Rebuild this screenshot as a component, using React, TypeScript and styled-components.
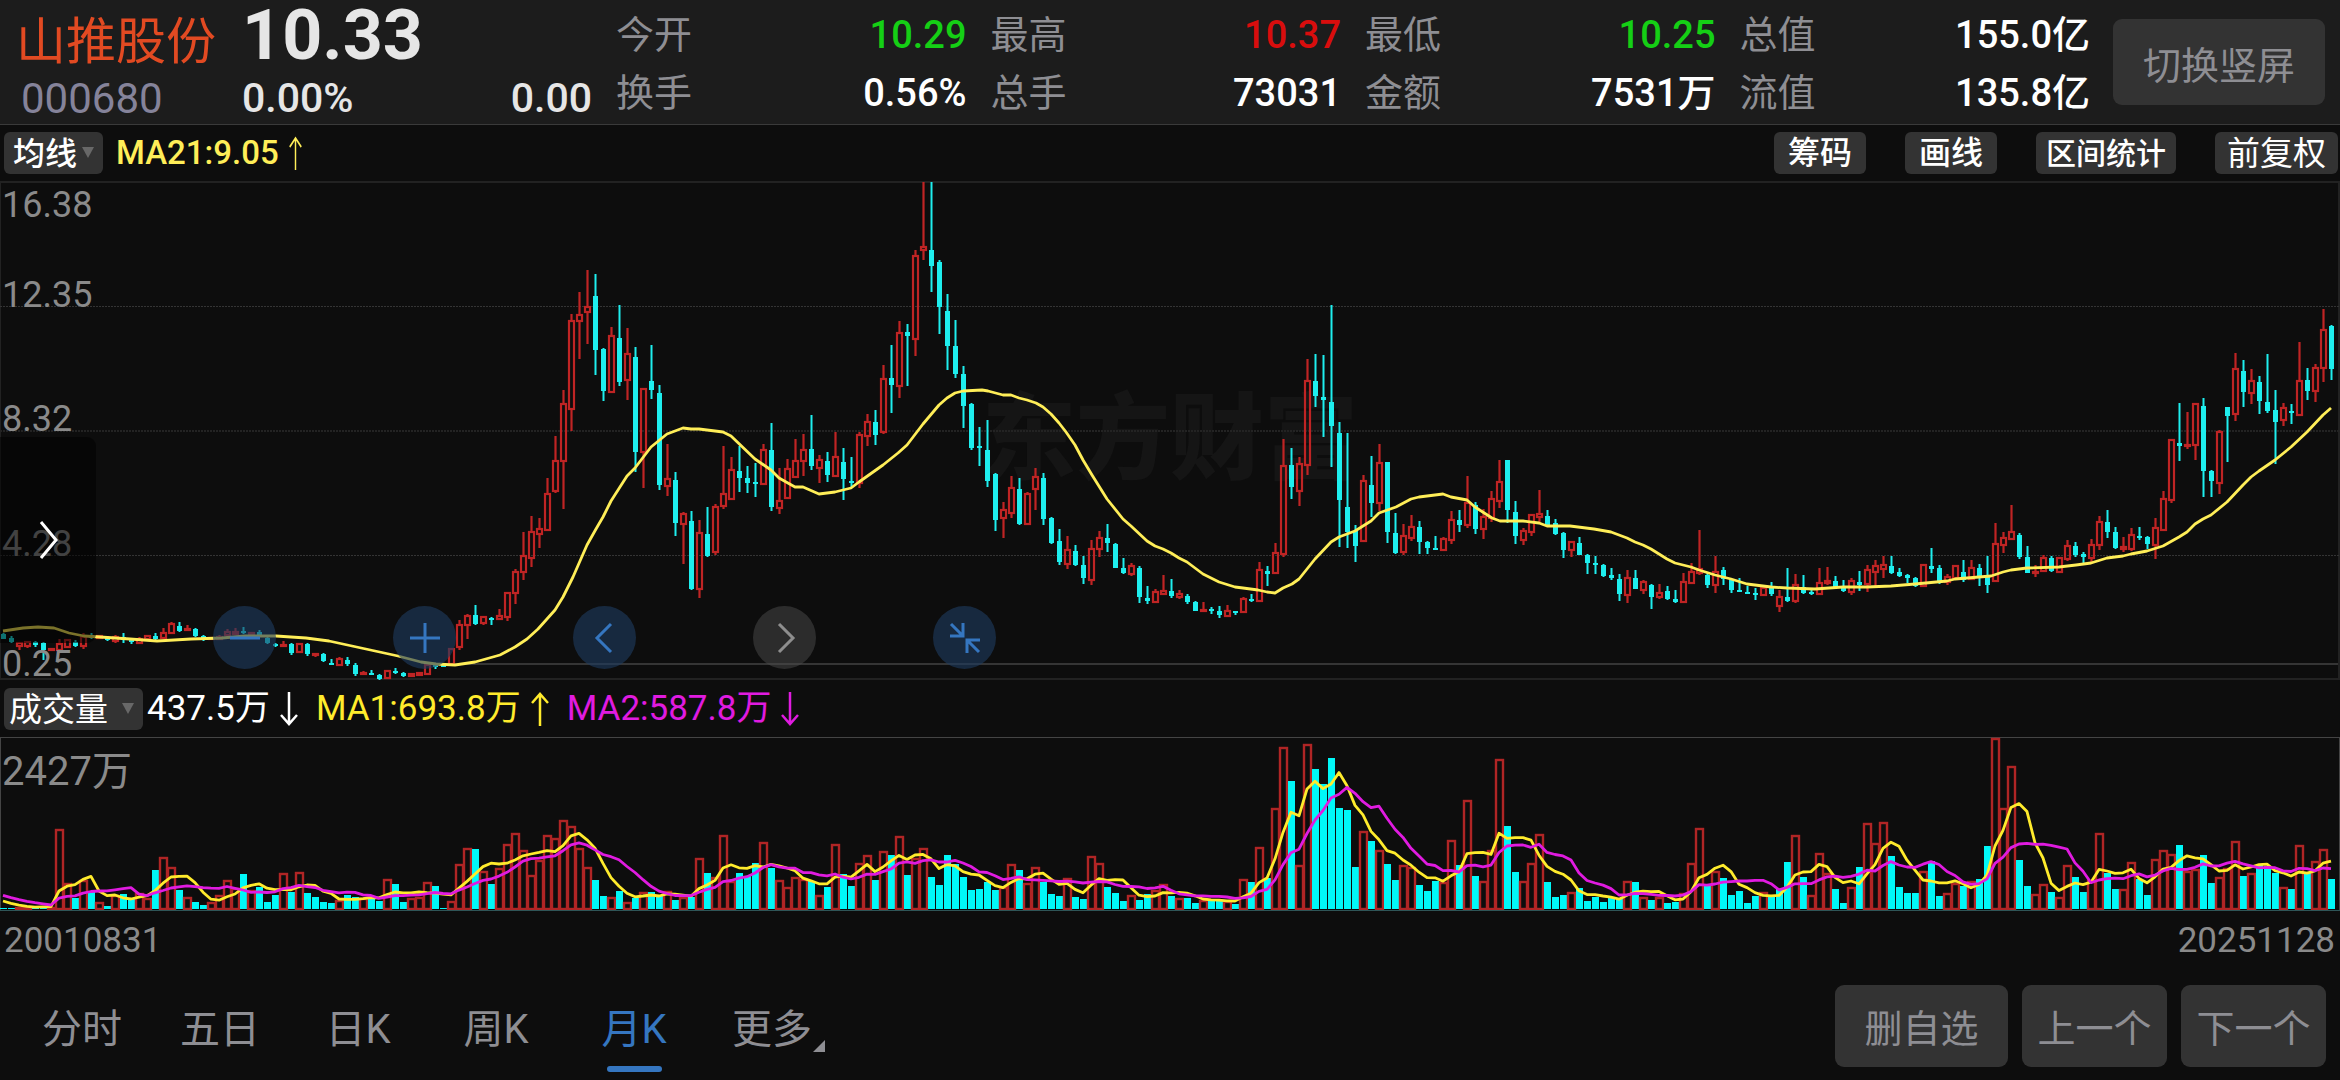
import React from 'react';
import styled, { createGlobalStyle } from 'styled-components';

const color = {
  page: '#0d0d0d',
  header: '#1c1c1c',
  button: '#333333',
  rule: '#222222',
  muted: '#8e8e93',
  axis: '#8a8a8a',
  up: '#bf2424',
  down: '#1eeeee',
  volUp: '#b02525',
  volDown: '#00f8f8',
  yellow: '#ffee58',
  volYellow: '#ffeb2c',
  magenta: '#e01be0',
  blue: '#3576c0',
};

const Global = createGlobalStyle`
  *, *::before, *::after { box-sizing: border-box; }
  body {
    margin: 0;
    background: ${color.page};
    font-family: Roboto, 'Noto Sans CJK SC', sans-serif;
  }
  button, select { font-family: inherit; border: 0; margin: 0; cursor: pointer; }
  dl, dt, dd, h1, p { margin: 0; font-weight: inherit; }
`;

/* ---------- data: monthly bars, c = close below open, r = close above open ---------- */
/* each bar: high, body top, body bottom, low, as chart ordinates */

const BARS = `
c633,634,639,639 c636,638,642,643 r642,643,646,650 r641,642,646,648 c641,642,645,647 c642,643,650,660
r648,649,650,651 r639,644,650,651 r639,640,647,648 c640,642,646,647 r633,637,646,649 c633,635,638,639
r635,636,638,638 c636,638,640,641 r635,637,641,643 c633,637,640,643 c638,640,642,644 r637,639,643,644
r635,636,639,640 c633,636,639,640 r628,633,638,639 r622,624,633,634 c622,626,631,632 r625,629,630,631
c628,629,636,637 c635,636,639,641 r637,638,639,640 r635,637,639,640 r629,632,635,637 r628,632,634,635
c627,631,633,634 r632,633,634,635 c630,632,636,637 c636,638,643,644 c643,644,645,647 r641,645,646,647
c643,644,653,655 r643,644,652,653 c643,644,654,656 r653,654,655,657 c653,654,661,662 c659,663,664,665
r657,659,665,666 c657,660,664,666 c663,665,674,676 r671,673,674,675 c670,673,674,675 c674,675,679,680
r670,671,678,679 c668,671,673,674 c672,673,676,677 r673,674,676,677 r672,673,675,676 r664,665,674,675
c663,665,667,669 c665,665,667,667 r648,649,664,665 r620,625,647,650 r614,616,625,639 c605,615,624,625
r616,617,623,625 c617,618,620,625 r609,616,619,620 r593,593,617,621 r569,572,593,604 r532,556,572,580
r516,532,558,567 r518,529,534,548 r478,494,530,531 r436,461,491,493 r390,404,461,509 r314,321,409,431
r292,315,321,359 r270,307,312,344 c274,296,350,375 c348,349,391,401 r327,336,392,393 c305,338,382,386
r328,354,380,400 c347,357,452,472 r388,389,452,488 c345,381,390,399 c385,393,485,490 r444,479,486,496
c472,480,523,536 r512,514,524,564 c511,521,589,590 r520,533,589,598 c507,534,556,557 r504,507,552,555
r446,494,506,509 r457,470,499,499 c446,471,478,492 c466,478,483,493 c463,482,484,497 r444,450,484,485
c423,450,507,511 r468,501,508,514 r459,469,498,499 r439,461,477,478 r434,450,461,476 c415,449,466,470
r455,460,468,483 c452,461,475,482 r432,457,476,477 c448,462,479,500 c457,481,483,488 r432,435,483,488
r414,422,436,446 c410,422,435,445 r365,379,432,434 c345,378,385,413 r321,333,386,398 c324,332,336,386
r250,256,339,356 r182,247,250,260 c182,250,266,292 c260,262,307,334 c294,311,346,370 c320,346,374,378
c366,374,406,428 c403,404,448,450 c427,446,448,466 c420,450,481,487 c473,474,520,531 r502,510,518,538
r476,488,513,518 c478,489,524,525 r492,494,524,524 r468,477,489,510 c473,478,519,525 c517,518,543,544
c529,541,562,565 r536,550,564,569 c545,551,565,566 c556,565,578,584 r540,549,580,585 r531,538,549,557
c524,538,543,552 c543,544,568,568 c558,568,573,574 r563,566,574,576 c566,568,597,603 c586,598,601,604
r589,592,602,602 r575,591,594,595 c579,591,596,598 r590,594,597,599 c594,596,602,604 c601,602,611,611
r602,610,611,612 c607,609,611,614 c606,611,615,618 r605,611,616,617 c611,611,613,615 r597,599,612,613
c594,599,601,602 r562,570,601,601 c566,571,574,586 r543,553,573,574 r439,466,554,557 c448,465,487,499
r457,464,491,506 r359,381,465,475 c354,381,396,407 c355,397,400,437 c305,402,426,467 c422,433,500,547
c433,507,532,548 c525,531,546,562 r475,481,541,542 c456,485,503,517 r444,463,503,511 c462,462,532,543
c513,533,553,554 r524,536,552,555 r515,527,538,541 c521,527,542,554 c541,542,548,554 c536,548,549,550
r537,539,550,551 r511,520,540,544 c510,520,525,532 r476,503,525,528 c502,505,529,534 r509,517,529,539
r491,499,518,522 r460,482,501,508 c460,460,510,523 c501,512,536,544 r528,531,540,545 r514,515,532,536
r490,514,517,522 c510,516,525,527 c519,523,534,535 c532,533,550,558 r541,542,550,557 c537,543,555,555
c554,555,563,574 c556,563,565,574 c564,565,576,577 c568,575,578,580 c574,579,594,601 r570,578,595,603
c570,578,589,589 r580,582,590,594 c584,585,597,609 r584,593,597,599 c586,591,599,600 c590,599,602,603
r573,582,602,602 r563,572,583,583 r530,569,573,575 c573,575,585,588 r556,572,585,593 c567,570,579,585
c579,579,590,593 c578,590,591,592 c586,592,593,594 c588,593,595,600 r587,588,595,596 c582,587,594,596
r590,597,606,612 c568,597,601,602 r574,585,601,603 c575,587,593,594 c590,592,594,595 r568,583,594,595
r567,581,583,585 c576,581,587,587 c580,586,591,592 r578,581,592,595 c571,582,585,591 r565,570,584,592
r560,566,572,588 r556,565,569,578 c556,566,573,574 c568,572,576,577 c574,575,578,583 c577,578,586,587
r564,565,586,587 c548,566,569,573 c565,568,583,584 r574,577,582,585 r565,566,578,579 c560,572,580,582
r560,568,579,579 c564,568,577,586 c556,575,585,593 r523,544,581,582 r532,538,545,553 r505,532,539,540
c533,535,557,559 c546,557,573,573 r565,572,573,577 r555,558,571,572 c556,558,571,572 r557,558,572,572
r540,546,559,561 c542,546,555,557 c552,554,557,563 r539,545,558,562 r516,522,545,550 c510,522,532,538
c527,532,548,549 r537,547,549,552 r528,535,549,551 c527,536,537,540 c536,537,544,549 r518,528,545,559
r491,499,530,531 r439,440,500,503 c403,443,446,461 r412,445,446,449 r403,404,445,460 c398,406,471,497
c470,471,481,497 r430,432,483,494 c407,407,416,462 r353,369,414,421 c360,371,392,407 r369,381,393,404
c376,382,401,414 c354,402,411,413 c390,410,422,464 r403,408,420,426 c404,411,413,424 r342,381,415,416
c368,380,391,400 r364,368,391,402 r309,330,368,382 c325,326,369,380`;

const MA21 =
  '3,631 23,628 38,627 54,628 69,633 84,636 100,637 130,639 157,641 191,639 222,638 245,636 276,636 306,638 329,641 352,646 375,651 398,656 421,662 436,664 455,665 475,662 500,655 515,647 527,639 538,629 555,610 563,597 573,577 587,545 596,529 603,517 611,501 627,476 635,468 651,447 667,434 683,428 691,429 699,429 723,432 731,436 755,459 771,470 779,478 795,487 803,487 819,494 835,492 851,488 859,482 883,465 898,453 907,445 923,424 939,405 947,398 955,393 963,391 982,390 988,391 1003,395 1011,395 1019,398 1027,400 1036,403 1043,407 1051,414 1059,423 1066,432 1075,445 1083,460 1092,475 1107,499 1123,519 1131,526 1147,541 1155,546 1163,549 1171,553 1179,558 1187,562 1203,574 1219,582 1235,587 1243,588 1258,590 1267,592 1275,593 1283,588 1292,584 1299,579 1315,559 1331,542 1339,537 1355,531 1371,521 1379,513 1396,507 1411,499 1419,497 1443,494 1451,497 1467,500 1475,507 1492,518 1500,521 1523,521 1539,523 1547,526 1570,526 1594,529 1611,532 1627,538 1635,542 1643,545 1651,549 1667,559 1675,563 1691,567 1699,570 1715,575 1731,579 1747,584 1755,585 1771,587 1787,588 1815,589 1843,587 1867,587 1891,586 1915,584 1947,581 1955,579 1979,577 1991,576 2003,572 2011,570 2027,568 2059,567 2076,565 2091,563 2107,558 2123,556 2131,554 2147,551 2163,546 2179,537 2187,532 2195,524 2203,519 2211,515 2227,502 2243,485 2251,477 2259,471 2275,460 2291,447 2307,432 2323,415 2331,408';

const VOLUME_TOPS = [
  908, 908, 907, 907, 906, 906, 907, 829, 883, 898, 880, 892, 902, 906, 895, 894, 898, 893, 898, 870,
  857, 867, 890, 897, 902, 905, 902, 895, 880, 888, 874, 890, 887, 902, 895, 873, 892, 872, 893, 897,
  902, 903, 900, 895, 897, 898, 898, 901, 879, 884, 902, 898, 897, 882, 886, 908, 901, 864, 848, 849,
  871, 884, 868, 844, 833, 850, 875, 860, 835, 838, 820, 826, 848, 867, 880, 896, 897, 891, 902, 898,
  892, 892, 896, 891, 900, 897, 897, 858, 873, 877, 835, 881, 873, 876, 863, 842, 868, 880, 887, 877,
  879, 881, 895, 887, 844, 874, 886, 863, 855, 880, 851, 855, 836, 875, 858, 848, 877, 885, 855, 864,
  877, 890, 889, 882, 890, 887, 864, 870, 883, 867, 882, 894, 896, 878, 897, 899, 856, 863, 887, 893,
  901, 895, 900, 894, 890, 884, 896, 898, 898, 903, 900, 900, 900, 901, 904, 879, 882, 847, 878, 808,
  747, 781, 865, 744, 769, 784, 758, 808, 810, 867, 831, 841, 850, 864, 880, 865, 867, 885, 891, 881,
  882, 840, 865, 800, 876, 881, 850, 759, 826, 872, 881, 863, 834, 882, 897, 895, 892, 888, 901, 897,
  902, 898, 898, 881, 882, 897, 900, 897, 903, 902, 893, 863, 828, 886, 871, 878, 895, 891, 903, 896,
  892, 897, 889, 862, 835, 877, 895, 853, 873, 889, 903, 887, 867, 823, 843, 822, 856, 887, 893, 893,
  871, 861, 896, 893, 883, 886, 881, 879, 846, 738, 808, 766, 860, 886, 894, 884, 892, 897, 865, 877,
  892, 880, 833, 873, 889, 889, 862, 879, 895, 859, 850, 854, 845, 871, 869, 855, 883, 877, 868, 841,
  876, 873, 865, 866, 873, 887, 889, 845, 872, 861, 849, 879,
];

/* months whose volume bar takes its colour from the previous close, not the open */
const FLIPPED = new Set([39, 222, 226, 278]);

/* volumes of the nine months before the first one shown, for the averages */
const EARLIER = [25, 22, 20, 18, 16, 14, 12, 9, 8];
const BASE = 910;

const bars = BARS.trim().split(/\s+/).map((s) => {
  const [high, top, bottom, low] = s.slice(1).split(',').map(Number);
  return { up: s[0] === 'r', high, top, bottom, low };
});

const xOf = (i: number) => 3 + 8 * i;

function average(span: number): string {
  const all = [...EARLIER, ...VOLUME_TOPS.map((t) => BASE - t)];
  return VOLUME_TOPS.map((_, i) => {
    const end = i + EARLIER.length + 1;
    const sum = all.slice(end - span, end).reduce((a, b) => a + b, 0);
    return `${xOf(i)},${(BASE - sum / span).toFixed(1)}`;
  }).join(' ');
}

/* ---------- layout ---------- */

const Page = styled.main`
  min-height: 100vh;
  display: flex;
  flex-direction: column;
  background: ${color.page};
  color: #fff;
`;

const Header = styled.header`
  display: flex;
  padding: 0 15px 0 16px;
  height: 125px;
  background: ${color.header};
  border-bottom: 1px solid #3a3a3a;
`;

const NameBlock = styled.div`
  width: 226px;
  padding-top: 12px;
`;

const StockName = styled.h1`
  font-size: 50px;
  line-height: 60px;
  color: #e24a22;
  white-space: nowrap;
`;

const Code = styled.p`
  padding-left: 5px;
  font-size: 42px;
  line-height: 54px;
  color: #85839a;
`;

const PriceBlock = styled.div`
  width: 350px;
  margin-right: 24px;
  color: #e6e6e6;
`;

const Price = styled.p`
  font-size: 70px;
  line-height: 70px;
  font-weight: 700;
`;

const Change = styled.p`
  display: flex;
  justify-content: space-between;
  font-size: 41px;
  line-height: 56px;
  font-weight: 500;
`;

const Stats = styled.dl`
  flex: 1;
  display: grid;
  grid-template-columns: repeat(4, 1fr);
  grid-template-rows: 58px 58px;
  column-gap: 24px;
  padding-top: 6px;
  font-size: 38px;
  line-height: 58px;
`;

const Stat = styled.div`
  display: flex;
  justify-content: space-between;
  white-space: nowrap;
`;

const StatLabel = styled.dt`
  color: ${color.muted};
`;

const StatValue = styled.dd<{ $tone?: string }>`
  font-weight: 500;
  color: ${(p) => p.$tone ?? '#fff'};
`;

const BigButton = styled.button<{ $width: number; $height: number }>`
  width: ${(p) => p.$width}px;
  height: ${(p) => p.$height}px;
  padding: 0;
  border-radius: 9px;
  background: ${color.button};
  color: ${color.muted};
  font-size: 38px;
  white-space: nowrap;
`;

const SwitchSlot = styled.div`
  display: flex;
  align-items: center;
  margin-left: 23px;
`;

const Bar = styled.div<{ $height: number }>`
  display: flex;
  align-items: center;
  height: ${(p) => p.$height}px;
  padding: 0 2px 0 4px;
`;

const Picker = styled.label<{ $width: number }>`
  position: relative;
  width: ${(p) => p.$width}px;
  height: 42px;
  margin-right: 4px;
`;

const Select = styled.select<{ $size: number; $weight: number; $inset: number }>`
  appearance: none;
  width: 100%;
  height: 42px;
  padding: 1px 0 0 ${(p) => p.$inset}px;
  border-radius: 6px;
  background: ${color.button};
  color: #fff;
  font-size: ${(p) => p.$size}px;
  font-weight: ${(p) => p.$weight};
`;

const Caret = styled.span`
  position: absolute;
  right: 9px;
  top: 15px;
  border: 6px solid transparent;
  border-top: 11px solid #686868;
  border-bottom: 0;
  pointer-events: none;
`;

const Reading = styled.span<{ $tone: string; $size: number; $weight?: number }>`
  display: flex;
  align-items: center;
  gap: 10px;
  margin-right: 18px;
  color: ${(p) => p.$tone};
  font-size: ${(p) => p.$size}px;
  line-height: 42px;
  font-weight: ${(p) => p.$weight ?? 400};
  white-space: nowrap;
`;

const MaReading = styled(Reading)`
  margin-left: 9px;
`;

const Tools = styled.div`
  display: flex;
  gap: 39px;
  margin-left: auto;
`;

const Tool = styled.button<{ $size: number; $pad: number; $weight: number }>`
  height: 42px;
  padding: 1px ${(p) => p.$pad}px 0;
  border-radius: 6px;
  background: ${color.button};
  color: #fff;
  font-size: ${(p) => p.$size}px;
  line-height: 41px;
  font-weight: ${(p) => p.$weight};
  white-space: nowrap;
`;

const ChartArea = styled.section`
  position: relative;
`;

const Plot = styled.svg`
  position: relative;
  display: block;
  width: 100%;
`;

const Watermark = styled.span`
  position: absolute;
  inset: 0;
  display: flex;
  align-items: center;
  justify-content: center;
  font-size: 94px;
  font-weight: 900;
  color: #151515;
`;

const Tick = styled.span<{ $top: number; $size?: number }>`
  position: absolute;
  left: 2px;
  top: ${(p) => p.$top}px;
  font-size: ${(p) => p.$size ?? 36}px;
  line-height: 40px;
  color: ${color.axis};
`;

const Drawer = styled.button`
  position: absolute;
  left: 0;
  top: 256px;
  width: 96px;
  height: 206px;
  padding: 0;
  border-radius: 0 9px 9px 0;
  background: rgba(0, 0, 0, 0.52);
`;

const Controls = styled.div`
  position: absolute;
  left: 213px;
  bottom: 11px;
  display: flex;
  gap: 117px;
`;

const Round = styled.button<{ $off?: boolean }>`
  display: grid;
  place-items: center;
  width: 63px;
  height: 63px;
  padding: 0;
  border-radius: 50%;
  background: ${(p) => (p.$off ? 'rgba(75, 75, 75, 0.5)' : 'rgba(31, 59, 95, 0.62)')};
  color: ${(p) => (p.$off ? '#8e8e8e' : color.blue)};
`;

const Dates = styled.div`
  display: flex;
  justify-content: space-between;
  padding: 0 5px 0 4px;
  font-size: 35px;
  line-height: 60px;
  color: ${color.axis};
`;

const Footer = styled.footer`
  flex: 1;
  display: flex;
  align-items: center;
  justify-content: space-between;
  min-height: 109px;
  padding: 0 14px 0 13px;
`;

const Tabs = styled.nav`
  display: flex;
  align-self: stretch;
`;

const Tab = styled.button<{ $active?: boolean }>`
  position: relative;
  width: 138px;
  padding: 0;
  background: transparent;
  color: ${(p) => (p.$active ? color.blue : color.muted)};
  font-size: 40px;

  &::after {
    content: '';
    display: ${(p) => (p.$active ? 'block' : 'none')};
    position: absolute;
    left: 42px;
    bottom: 8px;
    width: 55px;
    height: 6px;
    border-radius: 3px;
    background: ${color.blue};
  }
`;

const MoreMark = styled.span`
  position: absolute;
  right: 16px;
  bottom: 28px;
  border: 6px solid ${color.muted};
  border-top-color: transparent;
  border-left-color: transparent;
`;

const Actions = styled.div`
  display: flex;
  gap: 14px;
`;

/* ---------- icons ---------- */

const Arrow = ({ down, thin }: { down?: boolean; thin?: boolean }) => (
  <svg width={thin ? 13 : 18} height="34" viewBox="0 0 18 34" preserveAspectRatio="none" fill="none" stroke="currentColor" strokeWidth={thin ? 2 : 2.5}>
    <path d={down ? 'M9 0V31M1 23L9 32L17 23' : 'M9 34V3M1 11L9 2L17 11'} />
  </svg>
);

const Icon = ({ d, w = 3 }: { d: string; w?: number }) => (
  <svg width="32" height="32" viewBox="0 0 32 32" fill="none" stroke="currentColor" strokeWidth={w}>
    <path d={d} />
  </svg>
);

/* ---------- charts ---------- */

const PriceChart = () => (
  <Plot viewBox="0 181 2340 499" height="499" preserveAspectRatio="none" role="img" aria-label="月K线">
    <path d="M0 182H2340M0 679H2340M2339 182V680" stroke={color.rule} strokeWidth="2" />
    <path d="M0.5 182V680" stroke={color.rule} />
    <path d="M0 306.5H2340M0 555.5H2340" stroke="#343434" strokeDasharray="2 1" />
    <path d="M0 431H2340" stroke="#232323" strokeWidth="2" strokeDasharray="2 1" />
    <path d="M455 664H2338" stroke="#353535" strokeWidth="2" />
    {bars.map((b, i) => {
      const x = xOf(i) + 0.5;
      const h = b.bottom - b.top;
      if (!b.up) {
        return (
          <g key={i} fill={color.down}>
            <rect x={x - 1} y={b.high} width="2" height={b.low - b.high} />
            <rect x={x - 2.5} y={b.top} width="5" height={Math.max(h, 2)} />
          </g>
        );
      }
      return (
        <g key={i} stroke={color.up} strokeWidth="2.2" fill="none">
          <path d={`M${x} ${b.high}V${b.top}M${x} ${b.bottom}V${b.low}`} />
          <rect x={x - 2.5} y={b.top} width="5" height={Math.max(h, 1)} />
        </g>
      );
    })}
    <polyline points={MA21} fill="none" stroke={color.yellow} strokeWidth="2.8" strokeLinejoin="round" />
  </Plot>
);

const VolumeChart = () => (
  <Plot viewBox="0 737 2340 174" height="174" preserveAspectRatio="none" role="img" aria-label="成交量">
    <path d="M0 737.5H2340M0.5 737V911M2339.5 737V911" stroke="#444" />
    {VOLUME_TOPS.map((t, i) => {
      const x = xOf(i) + 0.5;
      const up = bars[i].up !== FLIPPED.has(i);
      return up ? (
        <rect key={i} x={x - 3.5} y={t + 1} width="7" height={Math.max(BASE - t - 2, 1)} fill="none" stroke={color.volUp} strokeWidth="2.4" />
      ) : (
        <rect key={i} x={x - 3.5} y={t} width="7" height={BASE - 1 - t} fill={color.volDown} />
      );
    })}
    <path d="M0 910.5H2340" stroke="#2f5557" />
    <polyline points={average(5)} fill="none" stroke={color.volYellow} strokeWidth="2.8" strokeLinejoin="round" />
    <polyline points={average(10)} fill="none" stroke={color.magenta} strokeWidth="2.8" strokeLinejoin="round" />
  </Plot>
);

const STATS: [string, string, string?][] = [
  ['今开', '10.29', '#15cf15'],
  ['最高', '10.37', '#d90d0d'],
  ['最低', '10.25', '#15cf15'],
  ['总值', '155.0亿'],
  ['换手', '0.56%'],
  ['总手', '73031'],
  ['金额', '7531万'],
  ['流值', '135.8亿'],
];

const TICKS: [string, number][] = [
  ['16.38', 4],
  ['12.35', 94],
  ['8.32', 218],
  ['4.28', 343],
  ['0.25', 463],
];

export default function App() {
  return (
    <Page>
      <Global />
      <Header>
        <NameBlock>
          <StockName>山推股份</StockName>
          <Code>000680</Code>
        </NameBlock>
        <PriceBlock>
          <Price>10.33</Price>
          <Change>
            <span>0.00%</span>
            <span>0.00</span>
          </Change>
        </PriceBlock>
        <Stats>
          {STATS.map(([label, value, tone]) => (
            <Stat key={label}>
              <StatLabel>{label}</StatLabel>
              <StatValue $tone={tone}>{value}</StatValue>
            </Stat>
          ))}
        </Stats>
        <SwitchSlot>
          <BigButton $width={212} $height={86}>切换竖屏</BigButton>
        </SwitchSlot>
      </Header>

      <Bar $height={56}>
        <Picker $width={99}>
          <Select $size={32} $weight={500} $inset={9} aria-label="主图指标">
            <option>均线</option>
          </Select>
          <Caret />
        </Picker>
        <MaReading $tone={color.yellow} $size={33} $weight={500}>
          MA21:9.05
          <Arrow thin />
        </MaReading>
        <Tools>
          <Tool $size={32} $pad={14} $weight={500}>筹码</Tool>
          <Tool $size={32} $pad={14} $weight={500}>画线</Tool>
          <Tool $size={30} $pad={10} $weight={500}>区间统计</Tool>
          <Tool $size={33} $pad={12} $weight={400}>前复权</Tool>
        </Tools>
      </Bar>

      <ChartArea>
        <Watermark>东方财富</Watermark>
        <PriceChart />
        {TICKS.map(([text, top]) => (
          <Tick key={text} $top={top}>{text}</Tick>
        ))}
        <Drawer aria-label="展开">
          <svg width="96" height="206" viewBox="0 0 96 206" fill="none" stroke="#fff" strokeWidth="3">
            <path d="M41 85L56 103L41 121" />
          </svg>
        </Drawer>
        <Controls>
          <Round aria-label="缩小"><Icon d="M1 16H31" /></Round>
          <Round aria-label="放大"><Icon d="M1 16H31M16 1V31" /></Round>
          <Round aria-label="左移"><Icon d="M22 2L8 16L22 30" /></Round>
          <Round $off aria-label="右移"><Icon d="M10 2L24 16L10 30" /></Round>
          <Round aria-label="收起"><Icon d="M1 14H14V1M2 2L13 13M31 18H18V31M30 30L19 19" /></Round>
        </Controls>
      </ChartArea>

      <Bar $height={57}>
        <Picker $width={139}>
          <Select $size={33} $weight={400} $inset={5} aria-label="副图指标">
            <option>成交量</option>
          </Select>
          <Caret />
        </Picker>
        <Reading $tone="#fff" $size={35}>437.5万<Arrow down /></Reading>
        <Reading $tone={color.volYellow} $size={35}>MA1:693.8万<Arrow /></Reading>
        <Reading $tone={color.magenta} $size={35}>MA2:587.8万<Arrow down /></Reading>
      </Bar>

      <ChartArea>
        <VolumeChart />
        <Tick $top={15} $size={40}>2427万</Tick>
      </ChartArea>

      <Dates>
        <time dateTime="2001-08-31">20010831</time>
        <time dateTime="2025-11-28">20251128</time>
      </Dates>

      <Footer>
        <Tabs>
          <Tab>分时</Tab>
          <Tab>五日</Tab>
          <Tab>日K</Tab>
          <Tab>周K</Tab>
          <Tab $active>月K</Tab>
          <Tab>更多<MoreMark /></Tab>
        </Tabs>
        <Actions>
          <BigButton $width={173} $height={82}>删自选</BigButton>
          <BigButton $width={145} $height={82}>上一个</BigButton>
          <BigButton $width={145} $height={82}>下一个</BigButton>
        </Actions>
      </Footer>
    </Page>
  );
}
